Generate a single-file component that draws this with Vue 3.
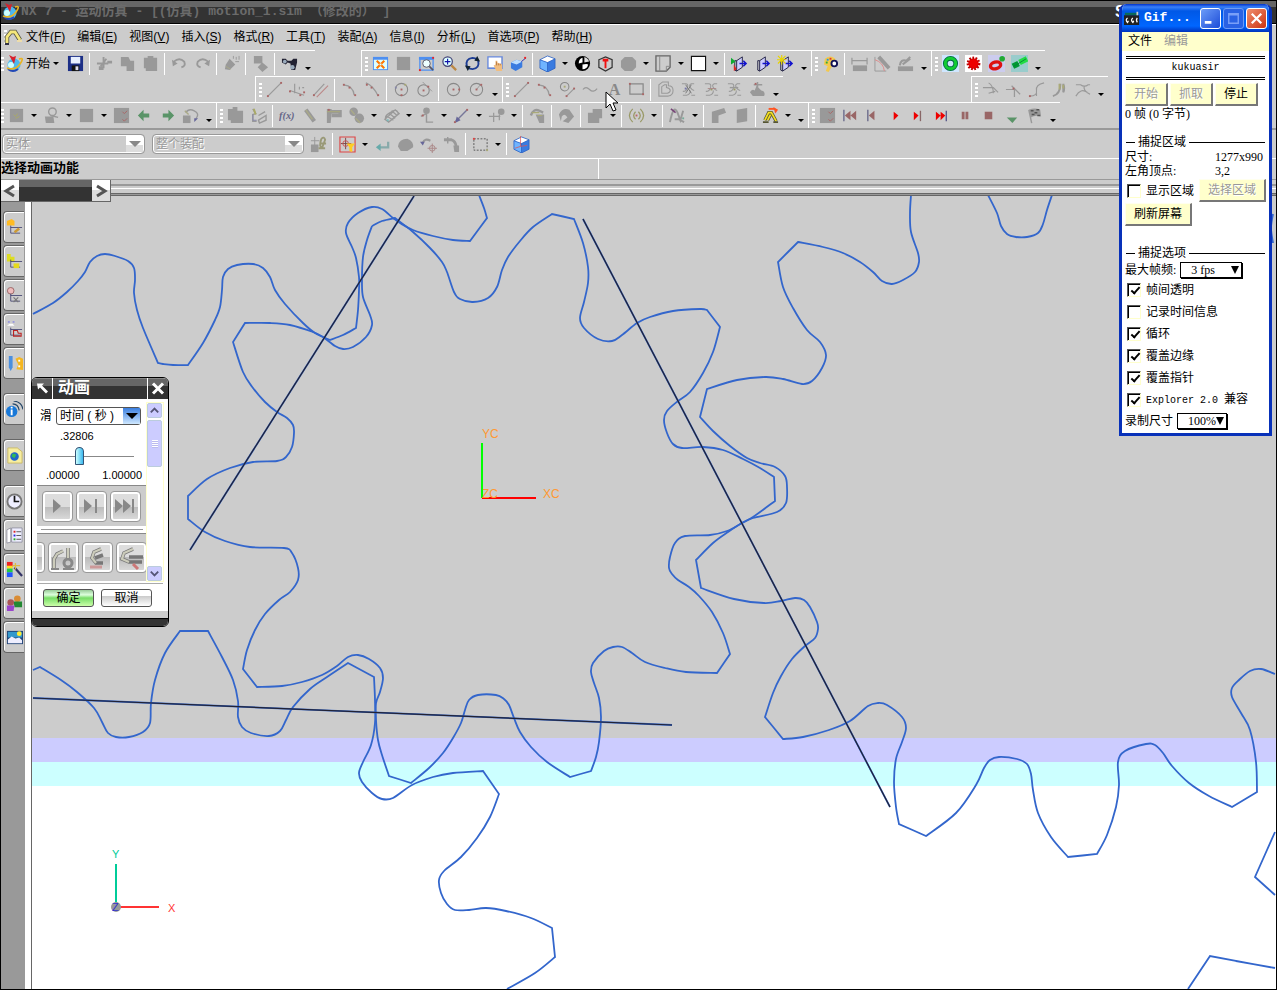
<template>
  <div class="app">
    <header class="title-bar">
      <svg class="app-logo" viewBox="0 0 18 18" v-html="icons.start"></svg>
      <span class="title-text">NX 7 - 运动仿真 - [(仿真) motion_1.sim （修改的） ]</span>
      <span class="brand">S</span>
    </header>

    <nav class="menu-bar">
      <span class="grip"></span>
      <svg class="menu-icon" viewBox="0 0 18 18" v-html="icons.sim"></svg>
      <a v-for="m in menus" :key="m.key" href="#" class="menu-link">{{ m.text }}(<u>{{ m.key }}</u>)</a>
    </nav>

    <div v-for="(row, r) in toolbarRows" :key="r" class="tool-row" :class="'row-' + (r + 1)">
      <div v-for="(bar, b) in row" :key="b" class="toolbar" :class="'bar-' + (b + 1)">
        <span class="grip"></span>
        <template v-for="(item, i) in bar" :key="i">
          <span v-if="item === '|'" class="sep"></span>
          <button v-else-if="item === 'v'" class="drop" aria-label="下拉"><i></i></button>
          <button v-else-if="item === '>'" class="more" aria-label="更多"><i></i></button>
          <button v-else-if="item === 'start'" class="start-btn">
            <svg viewBox="0 0 18 18" v-html="icons.start"></svg>开始
          </button>
          <button v-else class="tool" :aria-label="item">
            <svg viewBox="0 0 18 18" v-html="icons[item]"></svg>
          </button>
        </template>
      </div>
    </div>

    <div class="select-row">
      <div class="combo">
        <select v-model="typeFilter" disabled aria-label="类型过滤器"><option>实体</option></select>
        <span class="combo-arrow"></span>
      </div>
      <div class="combo wide">
        <select v-model="scope" disabled aria-label="选择范围"><option>整个装配</option></select>
        <span class="combo-arrow"></span>
      </div>
      <template v-for="(item, i) in selectTools" :key="i">
        <span v-if="item === '|'" class="sep"></span>
        <button v-else-if="item === 'v'" class="drop" aria-label="下拉"><i></i></button>
        <button v-else class="tool" :aria-label="item">
          <svg viewBox="0 0 18 18" v-html="icons[item]"></svg>
        </button>
      </template>
    </div>

    <div class="prompt-row">
      <div class="prompt">选择动画功能</div>
      <div class="status"></div>
    </div>

    <div class="rail">
      <div class="scroller">
        <button aria-label="向左"><svg viewBox="0 0 18 20"><path d="M13 5 5 10l8 5" /></svg></button>
        <span class="track"></span>
        <button aria-label="向右"><svg viewBox="0 0 18 20"><path d="M5 5l8 5-8 5" /></svg></button>
      </div>
    </div>

    <main class="work">
      <aside class="resource-bar">
        <div v-for="(group, g) in resourceTabs" :key="g" class="tab-group">
          <button v-for="tab in group" :key="tab" class="tab" :aria-label="tab">
            <svg viewBox="0 0 18 18" v-html="icons[tab]"></svg>
          </button>
        </div>
      </aside>

      <section class="canvas">
        <svg class="drawing">
          <g transform="translate(-32 -196)">
            <path v-for="(d, i) in gearPaths" :key="i" :d="d" class="gear" />
            <g v-for="(l, i) in lines" :key="'l' + i">
              <line :x1="l[0]" :y1="l[1]" :x2="l[2]" :y2="l[3]" class="line-blue" />
              <line :x1="l[0]" :y1="l[1]" :x2="l[2]" :y2="l[3]" class="line-dark" />
            </g>
            <path d="M482 443v55" stroke="#00ff00" stroke-width="2" />
            <path d="M482 498h54" stroke="#ff0000" stroke-width="2" />
            <g class="wcs">
              <text x="482" y="438">YC</text>
              <text x="482" y="498">ZC</text>
              <text x="543" y="498">XC</text>
            </g>
            <path d="M116 864v40" stroke="#00cc99" stroke-width="2" />
            <path d="M120 907h39" stroke="#ff3333" stroke-width="2" />
            <circle cx="116" cy="907" r="5" fill="#999" />
            <g class="triad">
              <text x="112" y="858" fill="#00cc99">Y</text>
              <text x="168" y="912" fill="#ff3333">X</text>
              <text x="112" y="911" fill="#3333cc">Z</text>
            </g>
          </g>
        </svg>

        <div class="dialog">
          <div class="dialog-title">
            <svg class="pin" viewBox="0 0 20 20"><path d="M5 5h7l-2 2 6 6-2 2-6-6-2 2z" fill="#fff" /></svg>
            <h2>动画</h2>
            <button aria-label="关闭"><svg viewBox="0 0 20 20"><path d="M5 5l10 10M15 5 5 15" stroke="#fff" stroke-width="3" /></svg></button>
          </div>
          <div class="dialog-body">
            <div class="panel">
              <div class="slide-row">
                <label for="slide-mode">滑</label>
                <div class="mode">
                  <select id="slide-mode" v-model="slideMode"><option>时间 ( 秒 )</option></select>
                  <span></span>
                </div>
              </div>
              <div class="current">.32806</div>
              <input v-model="time" class="time" type="range" min="0" max="1" step="0.00001" aria-label="时间" />
              <div class="range"><span>.00000</span><span>1.00000</span></div>
              <div class="strip play">
                <button v-for="p in playButtons" :key="p" :aria-label="p">
                  <svg viewBox="0 0 28 28" v-html="icons[p]"></svg>
                </button>
              </div>
              <hr />
              <div class="strip modes">
                <button v-for="p in modeButtons" :key="p" :aria-label="p">
                  <svg viewBox="0 0 28 28" v-html="icons[p]"></svg>
                </button>
              </div>
            </div>
            <div class="v-scroll">
              <button aria-label="向上"><svg viewBox="0 0 14 14"><path d="M3 9l4-4 4 4" /></svg></button>
              <span class="thumb"></span>
              <button class="down" aria-label="向下"><svg viewBox="0 0 14 14"><path d="M3 5l4 4 4-4" /></svg></button>
            </div>
          </div>
          <div class="dialog-actions">
            <button class="ok">确定</button>
            <button>取消</button>
          </div>
          <div class="dialog-foot"></div>
        </div>
      </section>
    </main>

    <svg class="pointer" viewBox="0 0 14 22">
      <path d="M1 1v16l4-4 3 7 3-1-3-7h5z" fill="#fff" stroke="#000" />
    </svg>

    <div class="gif-window">
      <div class="gif-title">
        <svg class="gif-icon" viewBox="0 0 18 18" v-html="icons.gif"></svg>
        <h1>Gif...</h1>
        <button class="win-btn" aria-label="最小化"><svg viewBox="0 0 20 20"><path d="M4 14h7" stroke="#fff" stroke-width="3" /></svg></button>
        <button class="win-btn dim" aria-label="最大化"><svg viewBox="0 0 20 20"><path d="M5 5h10v10H5zM5 6h10" stroke="#7aa0f8" stroke-width="1.5" fill="none" /></svg></button>
        <button class="win-btn close" aria-label="关闭"><svg viewBox="0 0 20 20"><path d="M5 5l10 10M15 5 5 15" stroke="#fff" stroke-width="2.4" /></svg></button>
      </div>
      <div class="gif-menu"><a href="#">文件</a><a href="#" class="off">编辑</a></div>
      <div class="gif-body">
        <div class="owner mono">kukuasir</div>
        <div class="gif-buttons">
          <button disabled>开始</button>
          <button disabled>抓取</button>
          <button>停止</button>
        </div>
        <div class="frames">0 帧 (0 字节)</div>

        <div class="legend">捕捉区域</div>
        <dl>
          <dt>尺寸:</dt><dd>1277x990</dd>
          <dt>左角顶点:</dt><dd>3,2</dd>
        </dl>
        <div class="area-row">
          <label class="check"><input v-model="showArea" type="checkbox" />显示区域</label>
          <button disabled>选择区域</button>
        </div>
        <button class="refresh">刷新屏幕</button>

        <div class="legend">捕捉选项</div>
        <div class="field">
          <label for="fps">最大帧频:</label>
          <div class="pick">
            <select id="fps" v-model="fps"><option>3 fps</option></select><span></span>
          </div>
        </div>
        <label v-for="o in options" :key="o.text" class="check option">
          <input v-model="o.on" type="checkbox" />
          <span><span v-if="o.latin" class="mono">{{ o.latin }}</span>{{ o.text }}</span>
        </label>
        <div class="field">
          <label for="size">录制尺寸</label>
          <div class="pick small">
            <select id="size" v-model="recordSize"><option>100%</option></select><span></span>
          </div>
        </div>
      </div>
    </div>
  </div>
</template>

<script setup>
import { ref, reactive } from 'vue'

const typeFilter = ref('实体')
const scope = ref('整个装配')
const slideMode = ref('时间 ( 秒 )')
const time = ref(0.32806)
const showArea = ref(false)
const fps = ref('3 fps')
const recordSize = ref('100%')

const options = reactive([
  { text: '帧间透明', on: true },
  { text: '记录时间信息', on: false },
  { text: '循环', on: true },
  { text: '覆盖边缘', on: true },
  { text: '覆盖指针', on: true },
  { latin: 'Explorer 2.0 ', text: '兼容', on: true },
])

const menus = [
  { text: '文件', key: 'F' },
  { text: '编辑', key: 'E' },
  { text: '视图', key: 'V' },
  { text: '插入', key: 'S' },
  { text: '格式', key: 'R' },
  { text: '工具', key: 'T' },
  { text: '装配', key: 'A' },
  { text: '信息', key: 'I' },
  { text: '分析', key: 'L' },
  { text: '首选项', key: 'P' },
  { text: '帮助', key: 'H' },
]

// '|' separator, 'v' drop-down arrow, '>' overflow arrow
const bar = (s) => s.split(' ')
const toolbarRows = [
  [
    bar('start save | cut copy paste | undo redo | brush | shapes | binoculars >'),
    bar('fit square zoomwin zoom rotate pan persp | cube v bw section hex v sheet v swatch v | door1 door2 door3 >'),
    bar('palette | dim angle measure >'),
    bar('gear1 gear2 gear3 gear4 >'),
  ],
  [
    bar('line perp parallel | arc arc2 | circle circle2 | circle3 circle4 >'),
    bar('line arc circline spline letter rect | offset cross1 cross2 cross3 cloud >'),
    bar('trim1 trim2 trim3 trim4 trim5 >'),
  ],
  [
    bar('env v person v square v box left right redoball >'),
    bar('clip links | fx rod joint gears v spring v pinpt v vector v marker v | robot | turn | block v | signal v | graph v | part1 part2 | sim2 v >'),
    bar('box first prev play next last pause stop down flag >'),
  ],
]
const selectTools = bar('chain | filter v back blob undo2 elbow | marquee v | cubered')

const resourceTabs = [
  ['nav1', 'nav2', 'nav3', 'nav4', 'nav5'],
  ['info'],
  ['web'],
  ['clock', 'book', 'wand', 'people', 'photo'],
]
const playButtons = ['pPlay', 'pNext', 'pLast']
const modeButtons = ['mNone', 'mTrace', 'mClash', 'mMeasure']

const G = '#999'
const g = (d, w = 1.4) => `<path d="${d}" fill="none" stroke="${G}" stroke-width="${w}"/>`
const f = (d, c = G) => `<path d="${d}" fill="${c}"/>`
const s = (d, c, w = 1.5) => `<path d="${d}" fill="none" stroke="${c}" stroke-width="${w}"/>`
const dot = (x, y, c = '#a66') => `<rect x="${x - 1}" y="${y - 1}" width="2" height="2" fill="${c}"/>`
const cubeShape = f('M1 5 9 1l8 3v10l-8 4-8-4z', '#3a7be0') + f('M1 5 9 1l8 3-8 4z', '#fff') + f('M1 5l8 3v10l-8-4z', '#6fb4ff') + s('M1 5 9 1l8 3v10l-8 4-8-4zM9 8v10M1 5l8 3 8-4', '#2a5fc0', 0.8)
const doorShape = f('M6 6l6-4v11l-6 4z', '#ccf') + s('M6 6l6-4v11l-6 4zM6 6h-2v10l2 1', '#224', 1) + s('M9 9h7M13 6l3 3-3 3', '#11c', 1.6)
const crossShape = g('M2 3h4q3 0 2 4t-5 4M15 3h-3q-3 1-1 4t4 3M3 15h4q4-1 4-5M12 15h4', 1.1)
const tree = s('M5 7v8h10M5 9h12', '#336', 0.8)

const icons = {
  start: '<circle cx="9" cy="10" r="6.5" fill="#4cb8ee"/><circle cx="6" cy="10" r="3" fill="#cfffff"/>' + s('M3 14q5 4 10 0', '#2347b5', 2) + s('M2 13Q10 16 15 9T14 4', '#e9b320', 1.6) + f('M4 0l4 2 3-1-2 8z', '#d8202c'),
  sim: s('M3 15V9l4-5h4l5 8', '#554', 4.4) + s('M3 15V9l4-5h4l5 8', '#f5e77a', 2.8) + f('M13 12h5v2h-5z', '#eda') + f('M1 15h4v2H1z', '#334'),
  sim2: s('M3 14l4-8h3l5 9M9 8l-3 6', '#553', 3.4) + s('M3 14l4-8h3l5 9M9 8l-3 6', '#f5e020', 1.8) + s('M1 16h6M12 16h5', '#553', 2) + s('M7 2h7', '#f52', 2) + f('M12 0l5 3-3 4z', '#f52'),
  save: f('M1 1h16v16H1z', '#1c2f86') + f('M4 2h10v7H4z', '#e8f0ff') + f('M5 11h8v6H5z', '#111') + f('M9 12h3v4H9z', '#dde'),
  cut: g('M1 9h12M8 2v12M11 4l-6 8', 2) + f('M12 6h5v3h-5zM3 12h5v4H3z'),
  copy: f('M2 2h8l2 4h4v11H8v-5H2z'),
  paste: f('M2 3h4V1h6v2h4v14H4v-3H2z'),
  undo: g('M3 7q6-5 11 0 2 5-3 6', 2) + f('M1 5l1 7 5-3z'),
  redo: g('M15 7Q9 2 4 7q-2 5 3 6', 2) + f('M17 5l-1 7-5-3z'),
  brush: f('M7 4l6 6-6 6-5-1 1-5z') + g('M11 1v3M14 2v3M17 1v4M13 7h4', 1) + s('M3 12l5 3', '#aa8', 1),
  shapes: f('M2 1h9v8H2zM11 8l6 5-6 5-5-5z'),
  binoculars: f('M1 4h4l2 2h4l2-2h4v4l-2 8h-4L10 9 7 8 5 10l-4-2z', '#223') + '<circle cx="4" cy="7" r="2" fill="#9ab"/><circle cx="12" cy="13" r="2.4" fill="#9ab"/>',
  fit: f('M1 2h16v14H1z', '#4e8ff0') + f('M2 5h14v10H2z', '#dff') + s('M5 6l8 8M13 6l-8 8', '#f70', 2.2) + f('M8 9h2v2H8z', '#dff'),
  square: f('M2 2h14v14H2z'),
  zoomwin: f('M1 2h16v3H1z', '#4e8ff0') + s('M2 4h14v12H2z', '#4e8ff0', 1.4) + '<circle cx="9" cy="9" r="4" fill="#eff" stroke="#556"/>' + s('M12 12l4 4', '#556', 1.8) + dot(2, 16, '#e22') + dot(16, 3, '#e22'),
  zoom: '<circle cx="7" cy="7" r="5" fill="#dff" stroke="#447" stroke-width="1.3"/>' + s('M4 7h6M7 4v6', '#11a', 1.2) + s('M11 11l5 5', '#b84', 2.4),
  rotate: s('M3 12Q1 4 9 3q3 0 5 2M15 6q2 8-6 9-3 0-5-2', '#1d3d95', 2) + f('M14 1l3 6-6-1zM4 17l-3-6 6 1z', '#123'),
  pan: f('M1 2h14v11H1z', '#fff') + s('M1 2h15v12H1z', '#68d', 1.4) + f('M7 11l2-1V6h2v2l5 2v7h-6z', '#f0bd80') + s('M10 7v4M12 9v2M14 9v2', '#a63', 0.8),
  persp: f('M1 8l6-3 6 2v6l-7 4-5-3z', '#3a7be0') + f('M1 8l6-3 6 2-6 3z', '#bdf') + s('M12 7l5-4', '#33a', 1) + dot(16, 3, '#e22'),
  cube: cubeShape,
  bw: '<circle cx="9" cy="9" r="8" fill="#000"/>' + f('M9 3Q5 4 5 9l4-1zM9 10q5-1 6 0-1 5-6 5z', '#fff') + f('M11 2q4 1 5 5l-5 1z', '#ddd'),
  section: s('M2 5l7-3 7 3v8l-7 4-7-4z', '#333', 1.3) + f('M6 4h6v3h-2v7H8V7H6z', '#e11'),
  hex: f('M5 2h8l4 4v7l-4 4H5l-4-4V6z'),
  sheet: s('M1 1h15v12l-4 4H1z', '#666', 1.4) + s('M5 1v16M16 12h-4v5', '#888', 1),
  swatch: f('M1 1h16v16H1z', '#fff') + s('M1.500 1.500h15v15h-15z', '#111', 1.2),
  door1: doorShape + f('M0 3l5 4-5 3z', '#1a3') + f('M3 10l3 5-3 2z', '#d22'),
  door2: doorShape,
  door3: doorShape + s('M5 0v10M0 5h10M1 1l8 8M9 1L1 9', '#e8d400', 1.2),
  palette: f('M3 4q6-5 11 0l1 6-5 3-3 5-3-1 2-5-4-2z', '#f3c94f') + '<circle cx="13" cy="9" r="3" fill="#fff" stroke="#115" stroke-width="2"/>' + dot(6, 5, '#29d') + dot(9, 4, '#d33') + dot(5, 8, '#3a3'),
  dim: g('M1 3v7M17 3v7M1 6h16', 1.3) + f('M2 11h15v6H2z'),
  angle: g('M1 2v15h12', 1) + s('M1 5q9 3 10 12', '#d88', 1) + g('M5 2l11 12', 4),
  measure: f('M1 12h16v5H1z') + g('M3 11Q4 4 10 6l4-4M6 10l8-6', 2.2),
  gear1: f('M0 0h18v18H0z', '#cfe6ff') + '<circle cx="9" cy="9" r="5.500" fill="none" stroke="#064" stroke-width="5"/><circle cx="9" cy="9" r="5.500" fill="none" stroke="#1c3" stroke-width="3.200"/>',
  gear2: f('M0 0h18v18H0z', '#fff') + '<circle cx="9" cy="9" r="5.500" fill="#e00"/><circle cx="9" cy="9" r="6" fill="none" stroke="#b00" stroke-width="2.600" stroke-dasharray="1.800 1.500"/>',
  gear3: f('M0 0h18v18H0z', '#cce') + '<ellipse cx="8" cy="11" rx="5.500" ry="3.500" transform="rotate(-15 8 11)" fill="none" stroke="#d11" stroke-width="3.600"/><circle cx="15" cy="4" r="3" fill="#2a3"/>',
  gear4: f('M0 0h18v18H0z', '#9cc') + s('M2 12l6-3', '#093', 6) + s('M9 8l8-4', '#2d4', 6) + s('M3 12l13-8', '#083', 1),
  line: g('M2 16 16 2', 1.3) + dot(2, 16) + dot(16, 2),
  perp: g('M1 10l15 5M6 13V3M11 9V6M16 7h-2', 1.2) + dot(1, 11) + dot(12, 15) + dot(16, 12),
  parallel: g('M2 15 13 3', 1.2) + s('M5 17 17 5', '#b88', 1.2) + dot(2, 15),
  arc: g('M3 4q10 1 11 11', 1.3) + dot(3, 4) + dot(9, 7) + dot(15, 15),
  arc2: g('M2 2q8 3 13 14', 1.3) + dot(3, 4) + dot(8, 7) + dot(15, 15),
  circle: '<circle cx="9" cy="9" r="6.500" fill="none" stroke="#888" stroke-width="1.100"/>' + dot(9, 9) + dot(13, 4, '#aa7') + dot(3, 7, '#88a') + dot(9, 15),
  circle2: '<circle cx="8" cy="10" r="6" fill="none" stroke="#888" stroke-width="1.100"/>' + g('M7 1l10 10', 1) + dot(8, 10) + dot(13, 6),
  circle3: '<circle cx="9" cy="9" r="6.500" fill="none" stroke="#888" stroke-width="1.100"/>' + dot(9, 9) + dot(15, 9),
  circle4: '<circle cx="9" cy="9" r="6.500" fill="none" stroke="#888" stroke-width="1.100"/>' + g('M9 9l4-5', 1) + dot(9, 9) + dot(14, 4),
  circline: '<circle cx="6" cy="6" r="4.500" fill="none" stroke="#888" stroke-width="1.100"/>' + g('M8 16l8-8', 1.2) + dot(6, 6, '#aa7') + dot(8, 16) + dot(16, 8),
  spline: g('M1 9q3-4 7 0t8-1', 1.3),
  letter: '<text x="4" y="15" font-family="Liberation Serif, serif" font-weight="bold" font-size="17" fill="#888">A</text>',
  rect: s('M2 3h14v11H2z', '#888', 1.3) + dot(2, 3) + dot(16, 14),
  offset: g('M2 16V4l4-3h6v4q5 0 5 5t-5 6zM5 13V6l3-2h2v3q4 1 4 3t-3 3z', 1.1),
  cross1: crossShape + s('M6 4l6 9M12 4l-6 9', '#777', 1) + dot(6, 8, '#77a'),
  cross2: crossShape + dot(9, 9, '#996') + s('M5 8h9', '#a88', 1),
  cross3: crossShape + s('M4 7h9', '#999') + dot(9, 9, '#996'),
  cloud: f('M1 12q2-4 5-2l2-5 5 5q5 1 3 6H4z') + g('M5 4h9M9 1v6', 1.6) + dot(7, 3),
  trim1: g('M1 7h11l5 5M7 2q5 3 5 11M7 13l7-2', 1.2),
  trim2: g('M1 9h9v8M7 5l9 9', 1.3) + dot(9, 8),
  trim3: g('M2 16q8 0 7-6T17 2M9 16v-3', 1.2) + dot(2, 16),
  trim4: g('M2 16q8-2 8-13M13 3v9q2-4 0-9', 2) + s('M9 3v6M13 4v4', '#aa7', 2),
  trim5: g('M2 4h5q4 3 8 0h2M2 16q5-9 12-4M11 5q-2 5 6 9', 1.2),
  env: f('M2 2h14v14H2z') + s('M6 8l2 2 2-3M8 12l4-2', '#aa6', 1),
  person: '<circle cx="10" cy="5" r="4" fill="none" stroke="#999" stroke-width="1.500"/>' + f('M2 10h9l1 7H3z') + g('M8 9l8 2', 1.5),
  box: f('M1 1h16v16H1z') + s('M10 5l2 2 3-3M10 13l2 2 3-3', '#a66', 1),
  left: f('M2 9l6-6v4h6v4H8v4z', '#5a9468'),
  right: f('M16 9l-6-6v4H4v4h6v4z', '#5a9468'),
  redoball: g('M4 6q3-5 9-2t2 8', 1.5) + f('M1 9h8v8H1z') + f('M13 12h4l-4 4z', '#669') + s('M3 4l4 4', '#aa8', 1.5),
  clip: f('M1 2h5V0h5v4h6v13H4v-3H1z'),
  links: g('M3 2l3 5-3 1v7h4', 1.6) + s('M4 2l2 6', '#aa6', 2) + g('M9 9l7-4M9 14l8-5v5l-7 3z', 1.5) + s('M3 8v6h4', '#88a', 1),
  fx: '<text x="0" y="13" font-family="Liberation Serif, serif" font-style="italic" font-weight="bold" font-size="11" fill="#668">f(x)</text>',
  rod: g('M4 3l9 12', 4.5) + s('M4 3l7 10', '#aa8', 1.5),
  joint: f('M2 2h5v5l-1 10H2z') + g('M6 5h10v4H7', 3.5) + s('M2 5h14', '#aa7', 1) + dot(4, 3, '#a66'),
  gears: '<circle cx="6" cy="5" r="4.500" fill="#999"/><circle cx="12" cy="12" r="5" fill="#999"/>' + s('M3 3l4 5M8 12l5 5', '#aa8', 1.5),
  spring: g('M2 13l4 3L17 7l-4-4zM3 9l8 5M6 6l7 6M9 4l6 5M3 12q-2-3 8-8 4-2 5 3', 1.4) + dot(5, 14, '#7bb'),
  pinpt: '<circle cx="9" cy="4" r="3.500" fill="#999"/>' + g('M9 7l-6 3M9 7v9h7', 1.5) + dot(5, 9, '#a66'),
  vector: s('M3 15 15 3', '#779', 1.5) + f('M2 17l2-7 4 4z', '#669') + dot(15, 3) + dot(2, 16),
  marker: '<circle cx="14" cy="5" r="3.500" fill="#999"/>' + g('M1 10h12M6 6v10M12 8v6', 1.3),
  robot: g('M2 9q3-8 9-5l4 2', 2.5) + f('M7 8h9v9h-5z') + s('M3 6h8M9 9h5', '#aa7', 1.2),
  turn: f('M1 8q4-8 11-5l5 7-6 7-6-2 5-4q-3-5-6-1l-1 5z'),
  block: f('M1 6h5V2h10v10h-3v5H1z'),
  signal: s('M5 2q-7 7 0 14M8 5q-4 4 0 8M13 2q7 7 0 14M11 5q4 4 0 8', '#996', 1.3) + dot(9, 9, '#b66'),
  graph: g('M1 16Q5-4 9 6l3 8 3-10M6 13h4l6 3', 2) + s('M2 2l5 4', '#747', 1.6) + dot(15, 12, '#7a9'),
  part1: f('M2 5l13-4 2 5-8 3v8H2z'),
  part2: f('M4 3l11-2v14l-11 2z'),
  first: s('M2 3v12', '#668', 1.4) + f('M9 4v10L3 9zM15 4v10L9 9z', '#966'),
  prev: s('M3 3v12', '#668', 1.4) + f('M10 4v10L4 9z', '#966'),
  play: f('M6 5v9l5-5z', '#e00'),
  next: f('M3 5v9l5-5z', '#e00') + s('M10 4v11', '#866', 1.4),
  last: f('M2 5v9l5-5zM7 5v9l5-5z', '#e00') + s('M13 4v11', '#558', 1.4),
  pause: f('M5 5h3v8H5zM9 5h3v8H9z', '#966'),
  stop: f('M5 5h8v8H5z', '#966'),
  down: f('M4 11h11l-5 6z', '#5a9468'),
  flag: g('M3 3l3 14', 1.5) + f('M3 3q6-3 12 0l1 7q-6-2-11 1z') + s('M5 4h3M9 6h3M6 8h3M11 3h3M12 9h3', '#555', 1.6),
  chain: g('M5 1v9M1 5h9', 1) + f('M1 9h8v8H1z') + s('M12 3q3-3 4 1l-3 8q-4 0-1-9M10 8h7M9 13h7', '#997', 2),
  filter: s('M1 1h16v16H1z', '#d44', 1.2) + s('M2 8h11M7 2v12', '#744', 1) + '<circle cx="7" cy="8" r="3" fill="none" stroke="#c55"/>' + f('M8 8h9l-3 4v5l-3-1v-4z', '#fc2'),
  back: s('M15 6v6H5', '#8aa', 2.4) + f('M2 12l5-4v8z', '#6aa'),
  blob: f('M1 11q1-8 10-8 7 3 6 9l-6 4H4z'),
  undo2: g('M3 7q2-5 8-2', 2.2) + f('M0 6l5 0-2 4z', '#669') + s('M13 8v10M8 13h10', '#a88', 1) + '<circle cx="13" cy="13" r="3" fill="none" stroke="#a88"/>',
  elbow: g('M1 4h8q4 1 5 7', 3) + f('M11 10h6v7h-5z') + g('M5 1v7', 1.5),
  marquee: '<rect x="2" y="3" width="14" height="12" fill="none" stroke="#555" stroke-dasharray="2 1.500"/>' + dot(2, 3, '#d44') + dot(16, 15, '#aa7'),
  cubered: cubeShape + s('M8 0v11l7-1M8 11l-6 2', '#d55', 0.8),
  nav1: f('M1 2l5-2 3 2v5H1z', '#fb2') + tree + s('M9 14l5-4', '#c93', 2.6),
  nav2: f('M1 1h4v3h4v5H1z', '#dd2') + tree + f('M8 11h6v5H8z', '#e5d91c'),
  nav3: '<circle cx="5" cy="4" r="3.500" fill="#ebb" stroke="#966"/>' + tree + s('M8 11l5 5M13 11l-5 5', '#777', 1.2),
  nav4: f('M1 5l3-2h3l2 2z', '#fff') + tree + s('M8 10h4l1 3h3v3H8z', '#b22', 1.2) + dot(3, 1, '#99d') + dot(8, 1, '#99d'),
  nav5: f('M3 1h4v12l-2 4-2-4z', '#4a8fe0') + f('M10 4l4-2 4 2v12l-7-1 2-5z', '#f5b722') + dot(14, 6, '#fff') + dot(14, 12, '#fff'),
  info: '<circle cx="6" cy="11" r="6" fill="#1878d8"/>' + s('M6 9v6M6 6v2', '#fff', 2) + s('M7 3q6 0 7 7M8 0q9 1 10 9', '#246', 1.2),
  web: f('M2 1h10l5 4v12H2z', '#f7eea0') + s('M2 1h10l5 4v12H2z', '#cb6', 1) + '<circle cx="9" cy="10" r="4.500" fill="#26c"/>' + f('M7 7l4 1-2 4-3-2z', '#3b5'),
  clock: '<circle cx="9" cy="9" r="7.500" fill="#eef" stroke="#777" stroke-width="2"/>' + s('M9 3v6h5', '#111', 1.8),
  book: f('M1 3l4-2v15l-4 1z', '#fff') + f('M6 1h11v15H6z', '#eef') + s('M1 3l4-2v15l-4 1zM6 1h11v15H6z', '#889', 0.8) + s('M11 5h5M11 9h5M11 13h5', '#555', 1) + dot(9, 5, '#d22') + dot(9, 9, '#22d') + dot(9, 13, '#2a2'),
  wand: f('M1 1h6v5H1z', '#e22') + f('M1 5h6v3H1z', '#fd2') + f('M1 8h6v4H1z', '#2c4') + f('M1 12h6v5H1z', '#25f') + s('M9 7l8 9', '#336', 2.4) + s('M10 2v7M7 5h8', '#db4', 1.3),
  people: '<circle cx="12" cy="4" r="3.500" fill="#d98c35"/>' + f('M8 7h9v6H9z', '#283') + '<circle cx="5" cy="8" r="3.500" fill="#a55"/>' + f('M1 11h8l-1 6H1z', '#94c'),
  photo: f('M1 2h17v14H1z', '#247') + f('M2 3h15v6H2z', '#39c') + f('M2 11l4-3 4 2 4-1 3 3v3H2z', '#eef') + '<circle cx="14" cy="5" r="2.500" fill="#fe3"/>',
  gif: f('M1 3h15v3H1z', '#0a6a5a') + f('M0 6h17v11H0z', '#222') + s('M4 9q-3 2 0 5l1-2M10 9q-3 2 0 5l1-2M15 9q-2 2 0 5', '#fff', 1.4) + s('M15 2v4', '#ccc', 2),
  pPlay: f('M10 7v14l8-7z', '#888'),
  pNext: f('M7 7v14l8-7z', '#888') + s('M19 7v14', '#888', 2),
  pLast: f('M4 7v14l8-7zM12 7v14l8-7z', '#888') + s('M22 7v14', '#888', 2),
  mNone: '',
  mTrace: s('M5 24v-9l3-5 6-3', '#777', 3.6) + s('M5 24v-9l3-5 6-3', '#ccb', 2.2) + '<circle cx="19" cy="19" r="4" fill="none" stroke="#888" stroke-width="3"/>' + s('M19 4v10', '#777', 3.6) + s('M19 4v10', '#ccb', 2.2) + s('M2 25h8M14 25h11', '#888', 2),
  mClash: s('M18 5l-7 3-2 6 4 5h7M12 14l8-3', '#777', 3.6) + s('M18 5l-7 3-2 6 4 5', '#ccb', 2.2) + s('M7 23h12', '#c99', 3),
  mMeasure: s('M16 5 7 9l-2 6 7 3h13M12 13h14', '#777', 3.6) + s('M16 5 7 9l-2 6 7 3', '#ccb', 2.2) + s('M16 20l5 5', '#c77', 3),
}

// Gear outlines: points are joined by a smooth curve, '|' marks a sharp corner.
const outlines = [
  '33,314 53,303 67,292 78,281 85,272 90,262 97,256 105,254 115,256 128,261 134,268 135,280 134,293 137,310 143,328 158,363 | 163,364 173,365 188,365 | 203,343 215,320 220,307 222,290 223,277 228,269 237,265 253,264 263,268 270,277 275,290 285,304 303,323 315,333 330,340 | 343,335 356,328 | 358,310 359,290 359,277 356,258 352,247 346,233 348,223 358,213 372,207 382,209 393,218 400,223 413,230 433,236 453,240 470,241 | 487,218 | 484,208 479,195',
  '372,226 | 382,221 395,218 | 413,232 430,248 442,262 447,272 454,292 460,299 473,302 488,298 497,287 502,270 508,257 520,241 533,227 552,214 | 574,219 | 583,243 588,267 588,283 584,302 580,318 584,328 598,339 612,341 622,335 637,323 650,317 673,311 700,309 707,310 | 720,327 | 713,352 703,373 690,392 678,401 667,411 664,420 667,433 673,444 682,448 703,447 723,450 743,459 760,468 774,477 | 775,501 | 753,517 742,523 727,531 710,535 685,536 675,543 670,557 669,568 672,574 678,580 689,587 699,596 712,612 723,633 730,654 | 717,673 | 686,672 665,668 645,662 632,653 622,647 613,647 604,651 593,663 591,672 594,683 599,698 601,717 599,742 596,757 591,771 | 570,777 | 547,762 531,747 520,732 514,718 509,705 504,699 496,695 478,695 469,700 465,710 461,723 453,738 443,753 429,768 411,783 | 389,776 | 382,755 378,740 376,720 376,703 380,692 383,678 380,668 369,659 358,655 348,657 337,666 322,675 302,682 282,686 257,687 | 243,669 | 247,650 255,630 265,614 279,600 290,592 298,580 298,568 292,553 284,548 250,547 225,541 205,532 188,519 | 188,496 | 207,479 230,468 253,462 277,461 286,457 292,447 294,433 293,425 287,418 277,412 265,402 253,388 243,372 233,342 | 245,323 | 270,323 290,325 313,332 323,337 335,346 343,349 353,347 366,337 372,325 370,315 363,297 362,280 363,257 367,240 372,226',
  '911,195 910,213 911,232 918,253 919,262 915,272 903,280 892,284 882,281 873,272 860,262 843,253 823,247 798,242 | 778,262 | 783,287 793,308 807,330 820,342 826,355 822,368 812,381 802,384 783,379 765,377 737,380 707,389 | 700,417 | 713,431 730,446 747,458 760,463 775,467 785,476 787,487 786,503 777,512 753,518 742,523 728,532 713,543 696,560 | 701,588 | 734,599 764,603 781,601 795,598 804,600 810,607 817,622 818,629 815,638 805,646 792,659 781,676 773,693 765,717 | 783,739 | 803,737 829,730 850,721 868,706 878,703 887,705 902,717 906,728 902,742 896,759 894,782 896,807 899,824 | 926,836 | 956,813 976,785 984,768 990,760 999,757 1017,759 1027,764 1031,774 1033,790 1038,813 1051,837 1068,857 | 1097,854 | 1107,835 1116,807 1119,785 1118,762 1125,751 1146,744 1155,745 1163,753 1172,766 1189,783 1209,796 1232,807 | 1257,792 | 1256,762 1250,730 1241,713 1232,697 1232,688 1239,680 1250,671 1261,669 1275,674',
  '988,195 997,213 1001,226 1007,234 1016,237 1027,237 1038,233 1043,224 1047,210 1052,195',
  '33,670 40,667 | 61,680 77,692 94,708 102,722 108,733 116,737 129,737 143,732 150,723 151,703 155,680 165,653 180,631 | 208,631 | 222,657 233,680 238,701 238,717 242,727 251,733 269,736 280,731 286,720 293,707 310,689 327,677 348,663 | 374,677 | 375,700 375,723 371,745 363,762 359,773 362,782 372,793 382,799 393,798 412,785 433,777 453,773 483,771 | 499,794 | 490,817 477,838 461,857 444,871 439,880 441,893 447,904 455,910 469,910 486,908 506,911 531,918 552,928 | 555,957 | 535,973 507,989',
  '1275,832 | 1255,877 | 1275,895',
  '1188,989 | 1210,956 | 1236,961 1275,968',
  '1273,214 1271,228 1273,243',
]

const lines = [
  [414, 196, 190, 550],
  [583, 219, 890, 807],
  [33, 698, 672, 725],
]

function curve(pts) {
  let d = ''
  for (let i = 0; i < pts.length - 1; i++) {
    const p0 = pts[i - 1] || pts[i]
    const [p1, p2] = [pts[i], pts[i + 1]]
    const p3 = pts[i + 2] || p2
    const c1 = [p1[0] + (p2[0] - p0[0]) / 6, p1[1] + (p2[1] - p0[1]) / 6]
    const c2 = [p2[0] - (p3[0] - p1[0]) / 6, p2[1] - (p3[1] - p1[1]) / 6]
    d += `C${c1} ${c2} ${p2}`
  }
  return d
}

function toPath(outline) {
  let last = null
  let d = ''
  for (const part of outline.split('|')) {
    const pts = part.trim().split(' ').map((p) => p.split(',').map(Number))
    if (last) pts.unshift(last)
    else d = `M${pts[0]}`
    d += curve(pts)
    last = pts[pts.length - 1]
  }
  return d
}

const gearPaths = outlines.map(toPath)
</script>

<style>
body {
  margin: 0;
}
</style>

<style scoped>
.app {
  position: relative;
  display: flex;
  flex-direction: column;
  min-height: 100vh;
  box-sizing: border-box;
  border: 1px solid #000;
  background: #ccc;
  overflow: hidden;
  font: 12px/14px "Liberation Sans", "Noto Sans CJK SC", sans-serif;
  color: #000;
}

button {
  padding: 0;
  border: 0;
  background: none;
  font: inherit;
  color: inherit;
}

select {
  appearance: none;
  margin: 0;
  padding: 0;
  border: 0;
  outline: 0;
  background: none;
  font: inherit;
  color: inherit;
  opacity: 1;
}

a {
  color: inherit;
  text-decoration: none;
}

svg {
  display: block;
}

/* title and menu */
.title-bar {
  display: flex;
  align-items: center;
  height: 22px;
  border-bottom: 1px solid #000;
  background: linear-gradient(#666 6px, #333 6px);
  color: #6b6b6b;
}

.app-logo {
  width: 18px;
  height: 18px;
  margin-right: 2px;
}

.title-text {
  flex: 1;
  font: bold 13px/18px "Liberation Mono", "Noto Sans CJK SC", monospace;
  white-space: pre;
}

.brand {
  width: 161px;
  font-weight: bold;
  font-size: 16px;
  color: #fff;
}

.menu-bar {
  display: flex;
  align-items: center;
  height: 23px;
  padding-bottom: 2px;
  border-top: 1px solid #fff;
}

.menu-icon {
  width: 18px;
  height: 18px;
  margin: 0 4px 0 -4px;
}

.menu-link {
  margin-right: 12px;
  white-space: nowrap;
}

/* toolbars */
.tool-row {
  display: flex;
  height: 26px;
}

.toolbar {
  display: flex;
  flex: none;
  align-items: center;
  height: 25px;
  border-top: 1px solid #fff;
  border-left: 1px solid #fff;
}

.bar-1 {
  border-left: 0;
}

.row-1 .bar-2 {
  margin-left: 46px;
}

.row-2 .bar-1 {
  margin-left: 254px;
  border-left: 1px solid #fff;
}

.row-2 .bar-3 {
  margin-left: 188px;
}

.grip {
  flex: none;
  width: 7px;
  height: 14px;
  background: repeating-linear-gradient(#fff 0 2px, transparent 2px 4px) 3px 0 / 3px 100% no-repeat;
}

.row-1 .bar-1 .grip,
.row-3 .bar-1 .grip {
  width: 4px;
  background-position: 0 0;
}

.tool {
  flex: none;
  display: flex;
  justify-content: center;
  width: 23px;
}

.tool svg {
  width: 17px;
  height: 17px;
}

.start-btn {
  display: flex;
  align-items: center;
  gap: 3px;
  width: 59px;
  white-space: nowrap;
}

.start-btn::after {
  content: "";
  border: 3px solid transparent;
  border-top-color: #000;
  border-bottom: 0;
}

.start-btn svg {
  width: 18px;
  height: 18px;
  flex: none;
}

.sep {
  flex: none;
  width: 2px;
  height: 22px;
  margin-right: 3px;
  border-right: 1px solid #fff;
}

.drop,
.more {
  flex: none;
  display: flex;
  justify-content: center;
  width: 12px;
}

.drop i,
.more i {
  border: 3px solid transparent;
  border-top-color: #000;
  border-bottom: 0;
}

.more {
  width: 14px;
  align-self: flex-end;
  padding-bottom: 6px;
}

/* selection row */
.select-row {
  display: flex;
  align-items: center;
  height: 28px;
  padding-left: 2px;
  border-top: 2px solid #999;
}

.combo {
  display: flex;
  width: 139px;
  height: 16px;
  margin-right: 9px;
  border: 1px solid #fff;
  outline: 1px solid #999;
  border-radius: 3px;
}

.combo.wide {
  width: 148px;
  margin-right: 4px;
}

.combo select {
  flex: 1;
  padding-left: 2px;
  color: #999;
  text-shadow: 1px 1px 0 #fff;
}

.combo-arrow {
  width: 17px;
  background: linear-gradient(#fff 9px, #ddd 9px);
  position: relative;
}

.combo-arrow::after {
  content: "";
  position: absolute;
  top: 5px;
  left: 3px;
  border: 6px solid transparent;
  border-top-color: #888;
  border-bottom: 0;
}

.prompt-row {
  display: flex;
  height: 20px;
  border-top: 1px solid #fff;
}

.prompt {
  width: 597px;
  font-weight: bold;
  font-size: 13px;
  line-height: 17px;
}

.status {
  flex: 1;
  border-left: 1px solid #fff;
}

.rail {
  position: relative;
  height: 17px;
  background: linear-gradient(#999 1px, #ccc 1px 5px, #999 5px 7px, #ccc 7px 9px, #fff 9px 10px, #ccc 10px 14px, #666 14px 15px, #999 15px 16px, #666 16px);
}

.scroller {
  position: absolute;
  z-index: 1;
  top: 1px;
  left: 0;
  display: flex;
  width: 110px;
  height: 22px;
  border-right: 1px solid #666;
  border-bottom: 1px solid #666;
  box-sizing: border-box;
}

.scroller button {
  width: 18px;
  background: linear-gradient(#fff 10px, #ddd 10px);
}

.scroller svg {
  width: 18px;
  height: 20px;
  fill: none;
  stroke: #555;
  stroke-width: 3;
}

.scroller .track {
  flex: 1;
  background: linear-gradient(#666 7px, #333 7px);
}

/* work area */
.work {
  flex: 1;
  display: flex;
}

.resource-bar {
  flex: none;
  display: flex;
  flex-direction: column;
  gap: 14px;
  width: 24px;
  padding-top: 15px;
  background: #999;
  border-right: 6px solid #fff;
}

.tab-group {
  display: flex;
  flex-direction: column;
  gap: 2px;
  padding: 0 1px 0 2px;
}

.tab {
  display: flex;
  align-items: center;
  height: 32px;
  padding-left: 2px;
  border: 1px solid #666;
  border-right: 0;
  border-radius: 4px 0 0 4px;
  background: #ccc;
  box-shadow: inset 1px 1px 0 #fff;
}

.tab svg {
  width: 17px;
  height: 17px;
}

.canvas {
  position: relative;
  flex: 1;
  border-left: 1px solid #666;
  background: linear-gradient(#ccc 542px, #ccf 542px 566px, #cff 566px 590px, #fff 590px);
}

.drawing {
  position: absolute;
  inset: 0;
  width: 100%;
  height: 100%;
}

.gear {
  fill: none;
  stroke: #36c;
  stroke-width: 1.8;
}

.line-blue {
  stroke: #36c;
  stroke-width: 1.8;
}

.line-dark {
  stroke: #223;
  stroke-width: 1.2;
}

.wcs text {
  font: 12px "Liberation Sans", sans-serif;
  fill: #f93;
}

.triad text {
  font: 11px "Liberation Sans", sans-serif;
}

/* animation dialog */
.dialog {
  position: absolute;
  top: 181px;
  left: -1px;
  width: 136px;
  border: 1px solid #000;
  border-radius: 6px;
  background: #fff;
  overflow: hidden;
}

.dialog-title {
  display: flex;
  height: 21px;
  background: linear-gradient(#888 1px, #666 1px 8px, #333 8px);
  color: #fff;
}

.dialog-title h2 {
  flex: 1;
  margin: 0;
  padding-left: 5px;
  border-left: 1px solid #fff;
  font: bold 16px/19px "Liberation Sans", "Noto Sans CJK SC", sans-serif;
}

.dialog-title button {
  border-left: 1px solid #fff;
}

.dialog-title svg {
  width: 20px;
  height: 21px;
}

.dialog-body {
  display: flex;
  height: 180px;
  padding: 4px 5px 0;
}

.panel {
  width: 110px;
  overflow: hidden;
}

.slide-row {
  display: flex;
  align-items: center;
  height: 20px;
  padding: 3px 0 0 3px;
}

.slide-row label {
  width: 11px;
  margin-right: 5px;
  overflow: hidden;
}

.mode {
  display: flex;
  width: 83px;
  height: 16px;
  border: 1px solid #555;
  border-radius: 3px;
}

.mode select {
  flex: 1;
  min-width: 0;
  padding-left: 3px;
}

.mode span {
  width: 17px;
  background: linear-gradient(#3b7fe0, #cfe8ff);
  position: relative;
}

.mode span::after {
  content: "";
  position: absolute;
  top: 5px;
  left: 3px;
  border: 6px solid transparent;
  border-top-color: #000;
  border-bottom: 0;
}

.current,
.range {
  font: 11px/14px "Liberation Sans", sans-serif;
}

.current {
  padding: 3px 0 0 23px;
}

.time {
  appearance: none;
  display: block;
  width: 84px;
  height: 25px;
  margin: 0 0 0 13px;
  background: linear-gradient(#888, #888) 0 13px / 100% 1px no-repeat;
}

.time::-webkit-slider-thumb {
  appearance: none;
  width: 9px;
  height: 18px;
  border: 1px solid #357;
  border-radius: 5px 5px 1px 1px;
  background: linear-gradient(90deg, #cff, #3bb8ee);
}

.range {
  display: flex;
  justify-content: space-between;
  padding: 0 5px 0 9px;
}

.strip {
  display: flex;
  gap: 3px;
  height: 40px;
  margin-top: 3px;
  padding-left: 5px;
  border-top: 1px solid #888;
  background: #ccc;
  align-items: center;
}

.strip button {
  flex: none;
  width: 31px;
  height: 31px;
  border: 1px solid #999;
  border-radius: 4px;
  box-shadow: inset 0 0 0 2px #fff;
  background: linear-gradient(#ddd 50%, #bbb 50%, #ddd);
}

.strip svg {
  width: 28px;
  height: 28px;
}

.strip.modes {
  height: 47px;
  padding-left: 0;
}

.strip.modes button:first-child {
  margin-left: -23px;
}

hr {
  height: 1px;
  margin: 3px 4px;
  border: 0;
  background: #999;
}

.v-scroll {
  display: flex;
  flex-direction: column;
  gap: 2px;
  width: 16px;
  height: 178px;
  outline: 1px solid #ffc;
}

.v-scroll button,
.v-scroll .thumb {
  width: 15px;
  height: 15px;
  border-radius: 2px;
  background: #ccf;
  border: 1px solid #bcd;
  box-sizing: border-box;
}

.v-scroll .thumb {
  height: 47px;
  background: repeating-linear-gradient(#fff 0 1px, #bbe 1px 2px) center / 6px 8px no-repeat, #ccf;
}

.v-scroll .down {
  margin-top: auto;
}

.v-scroll svg {
  width: 13px;
  height: 13px;
  fill: none;
  stroke: #557;
  stroke-width: 2;
}

.dialog-actions {
  display: flex;
  gap: 7px;
  height: 18px;
  margin: 0 5px;
  padding: 5px 11px 4px 6px;
  border-top: 1px solid #aaa;
}

.dialog-actions button {
  flex: 1;
  border: 1px solid #555;
  border-radius: 3px;
  background: linear-gradient(#fff 40%, #ccc 40%, #fff);
  line-height: 15px;
}

.dialog-actions .ok {
  background: linear-gradient(#9c9, #dfd 30%, #7d6 50%, #cfa);
}

.dialog-foot {
  height: 8px;
  border-top: 7px solid #ccc;
  background: linear-gradient(#000 1px, #333 1px);
}

.pointer {
  position: absolute;
  top: 90px;
  left: 604px;
  width: 14px;
  height: 22px;
}

/* gif capture window */
.gif-window {
  position: absolute;
  z-index: 2;
  top: 3px;
  right: 4px;
  width: 147px;
  border: 3px solid #0831b9;
  border-top: 0;
  border-radius: 7px 7px 0 0;
  background: #fff;
  font-family: "Liberation Serif", "Noto Sans CJK SC", serif;
  overflow: hidden;
}

.gif-title {
  display: flex;
  align-items: center;
  gap: 2px;
  height: 28px;
  margin: 0 -3px;
  padding: 0 5px;
  background: linear-gradient(#03c, #3a80f8 3px, #0058e6 7px, #06f 22px, #03b);
}

.gif-icon {
  width: 16px;
  height: 16px;
}

.gif-title h1 {
  flex: 1;
  margin: 0;
  padding-left: 2px;
  font: bold 13px/20px "Liberation Mono", monospace;
  color: #fff;
}

.win-btn {
  width: 21px;
  height: 21px;
  border: 1px solid #fff;
  border-radius: 3px;
  background: linear-gradient(135deg, #6c9cf8, #1c4cd8);
}

.win-btn svg {
  width: 19px;
  height: 19px;
}

.win-btn.dim {
  border-color: #6f9cf5;
  background: #2a62e4;
}

.win-btn.close {
  background: linear-gradient(135deg, #f09070, #cc3311);
}

.gif-menu {
  display: flex;
  gap: 12px;
  height: 19px;
  padding-left: 6px;
  background: #ffc;
  line-height: 19px;
}

.gif-menu .off {
  color: #999;
}

.gif-body {
  padding: 5px 3px 3px;
}

.gif-body button {
  height: 23px;
  padding: 0 8px;
  border: 1px solid #ffe;
  border-right: 2px solid #777;
  border-bottom: 2px solid #777;
  background: #ffc;
}

.gif-body button:disabled {
  color: #999;
  text-shadow: 1px 1px 0 #fff;
}

.mono {
  font-family: "Liberation Mono", monospace;
  font-size: 10px;
  white-space: pre;
}

.owner {
  height: 18px;
  margin: 0 1px;
  border-top: 3px double #000;
  border-bottom: 3px double #000;
  text-align: center;
  line-height: 18px;
}

.gif-buttons {
  display: flex;
  gap: 2px;
  margin: 3px 0 1px;
}

.gif-buttons button {
  width: 43px;
}

.frames {
  margin-bottom: 14px;
}

.legend {
  display: flex;
  align-items: center;
  gap: 3px;
  height: 14px;
  margin: 0 1px;
}

.legend::before,
.legend::after {
  content: "";
  width: 9px;
  height: 1px;
  background: #000;
}

.legend::after {
  flex: 1;
}

dl {
  display: grid;
  grid-template-columns: 90px 1fr;
  margin: 1px 0;
}

dd {
  margin: 0;
}

.area-row {
  display: flex;
  align-items: center;
  justify-content: space-between;
}

.area-row button {
  width: 67px;
}

.check {
  display: flex;
  align-items: center;
  gap: 5px;
  padding-left: 2px;
  white-space: nowrap;
}

.check input {
  appearance: none;
  width: 14px;
  height: 14px;
  margin: 0;
  border: 1px solid #ffc;
  border-top: 1px solid #555;
  border-left: 1px solid #555;
  background: #fff;
  box-shadow: inset 1px 1px 0 #000;
}

.check input:checked::after {
  content: "";
  display: block;
  width: 3px;
  height: 7px;
  margin: 1px 0 0 5px;
  border: solid #000;
  border-width: 0 2px 2px 0;
  transform: rotate(42deg);
}

.option {
  height: 22px;
}

.refresh {
  width: 67px;
  margin: 1px 0 20px;
}

.field {
  display: flex;
  align-items: center;
  gap: 4px;
  height: 19px;
  white-space: nowrap;
}

.pick {
  display: flex;
  align-items: center;
  width: 60px;
  height: 14px;
  border: 1px solid #000;
  box-shadow: 1px 1px 0 #000;
}

.pick.small {
  width: 48px;
}

.pick select {
  flex: 1;
  min-width: 0;
  padding-left: 10px;
}

.pick span {
  margin-right: 2px;
  border: 4px solid transparent;
  border-top: 8px solid #000;
  border-bottom: 0;
}
</style>
